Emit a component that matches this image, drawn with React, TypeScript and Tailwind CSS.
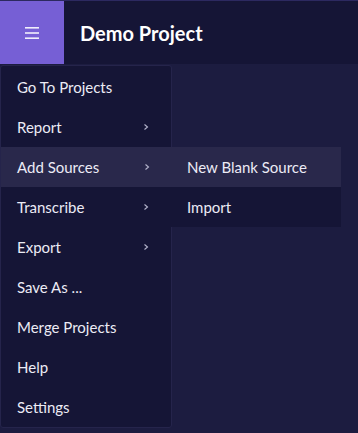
import React from 'react';

const ITEMS: { label: string; sub?: boolean }[] = [
  { label: 'Go To Projects' },
  { label: 'Report', sub: true },
  { label: 'Add Sources', sub: true },
  { label: 'Transcribe', sub: true },
  { label: 'Export', sub: true },
  { label: 'Save As ...' },
  { label: 'Merge Projects' },
  { label: 'Help' },
  { label: 'Settings' },
];

function Chevron() {
  return (
    <svg width="6" height="8" viewBox="0 0 6 8" className="text-[#b4b4cc]">
      <path d="M1.5 1.5 L4.5 4 L1.5 6.5" fill="none" stroke="currentColor" strokeWidth="1.1" />
    </svg>
  );
}

export default function App() {
  return (
    <div className="w-[358px] h-[433px] bg-[#1c1c40] flex flex-col overflow-hidden font-['Lato','Noto_Sans',sans-serif]">
      {/* Header */}
      <div className="h-[64px] shrink-0 flex bg-[#151536] border-t border-[#2c2960]">
        <div className="w-[64px] bg-[#765fd5] flex items-center justify-center">
          <svg width="16" height="14" viewBox="0 0 16 14">
            <rect x="1" y="1" width="14" height="1.6" fill="#f0eefc" />
            <rect x="1" y="6.2" width="14" height="1.6" fill="#f0eefc" />
            <rect x="1" y="11.4" width="14" height="1.6" fill="#f0eefc" />
          </svg>
        </div>
        <div className="flex items-center pl-4 pt-px text-white text-[20px] font-bold">
          Demo Project
        </div>
      </div>

      {/* Menu */}
      <div className="flex items-start pt-px">
        <div className="w-[172px] bg-[#151536] border border-[#25244b] rounded-[3px] flex flex-col pt-px">
          {ITEMS.map((it) => (
            <div
              key={it.label}
              className={`h-[40px] flex items-center pl-4 pr-[22px] text-[15px] text-[#ecebf5] ${
                it.label === 'Add Sources' ? 'bg-[#29284b] -mr-px' : ''
              }`}
            >
              <span className="flex-1">{it.label}</span>
              {it.sub && <Chevron />}
            </div>
          ))}
        </div>
        {/* Submenu */}
        <div className="mt-[82px] -ml-px w-[170px] flex flex-col bg-[#151536] text-[15px] text-[#ecebf5]">
          <div className="h-[40px] flex items-center pl-4 bg-[#29284b]">New Blank Source</div>
          <div className="h-[40px] flex items-center pl-4">Import</div>
        </div>
      </div>
    </div>
  );
}
